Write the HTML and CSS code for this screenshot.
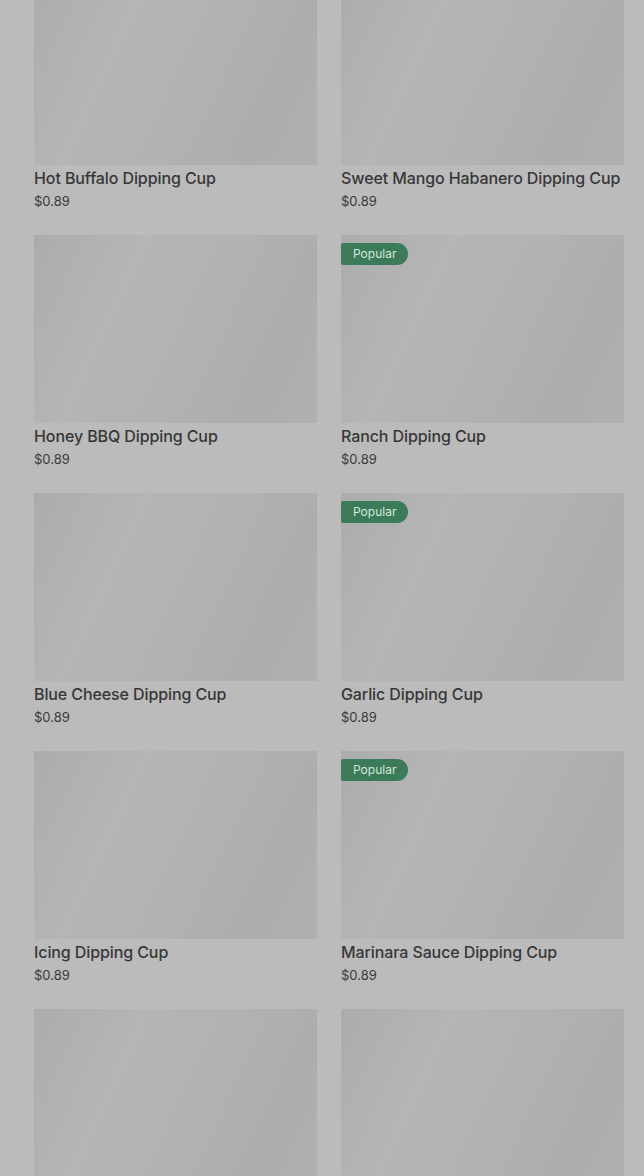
FILE: index.html
```html
<!DOCTYPE html>
<html>
<head>
    <title>Dipping Cups</title>
    <link rel="stylesheet" href="styles.css">
</head>
<body>
    <div class="menu-grid">
        <div class="item">
            <div class="thumb"></div>
            <div class="name">Hot Buffalo Dipping Cup</div>
            <div class="price">$0.89</div>
        </div>
        <div class="item">
            <div class="thumb"></div>
            <div class="name">Sweet Mango Habanero Dipping Cup</div>
            <div class="price">$0.89</div>
        </div>
        <div class="item">
            <div class="thumb"></div>
            <div class="name">Honey BBQ Dipping Cup</div>
            <div class="price">$0.89</div>
        </div>
        <div class="item">
            <div class="thumb"><span class="badge">Popular</span></div>
            <div class="name">Ranch Dipping Cup</div>
            <div class="price">$0.89</div>
        </div>
        <div class="item">
            <div class="thumb"></div>
            <div class="name">Blue Cheese Dipping Cup</div>
            <div class="price">$0.89</div>
        </div>
        <div class="item">
            <div class="thumb"><span class="badge">Popular</span></div>
            <div class="name">Garlic Dipping Cup</div>
            <div class="price">$0.89</div>
        </div>
        <div class="item">
            <div class="thumb"></div>
            <div class="name">Icing Dipping Cup</div>
            <div class="price">$0.89</div>
        </div>
        <div class="item">
            <div class="thumb"><span class="badge">Popular</span></div>
            <div class="name">Marinara Sauce Dipping Cup</div>
            <div class="price">$0.89</div>
        </div>
        <div class="item">
            <div class="thumb"></div>
        </div>
        <div class="item">
            <div class="thumb"></div>
        </div>
    </div>
</body>
</html>
```

FILE: styles.css
```css
body {
    margin: 0;
    height: 1176px;
    overflow: hidden;
    background-color: #bbbbbb;
    font-family: Inter, 'Liberation Sans', sans-serif;
    color: #373737;
}

/* list is scrolled a little, first row is cut at the top */
.menu-grid {
    display: grid;
    grid-template-columns: 283px 283px;
    column-gap: 24px;
    row-gap: 26px;
    padding: 0 20px 0 34px;
    margin-top: -23px;
}

.item {
    display: flex;
    flex-direction: column;
}

.thumb {
    position: relative;
    height: 188px;
    background: linear-gradient(115deg, #acacac 0%, #b5b5b5 30%, #b2b2b2 55%, #adadad 80%, #b0b0b0 100%);
}

.badge {
    position: absolute;
    top: 8px;
    left: 0;
    height: 22px;
    line-height: 22px;
    padding: 0 12px;
    font-size: 12px;
    color: #d6e6db;
    background-color: #3c7b59;
    border-radius: 2px 11px 11px 2px;
}

.name {
    margin-top: 3px;
    font-size: 16px;
    font-weight: 500;
    line-height: 20px;
    letter-spacing: -0.1px;
}

.price {
    margin-top: 5px;
    font-size: 13px;
    line-height: 16px;
    color: #3a3a3a;
}
```
